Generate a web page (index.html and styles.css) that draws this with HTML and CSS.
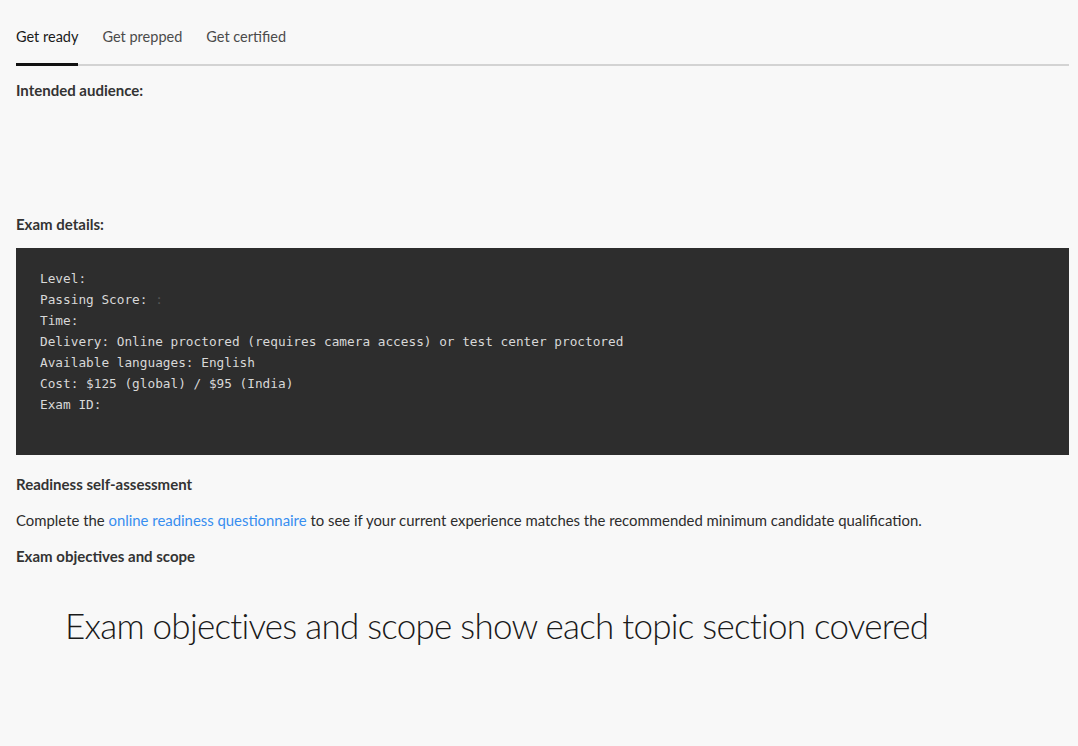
FILE: index.html
```html
<!DOCTYPE html>
<html lang="en">
<head>
<meta charset="utf-8">
<title>Get ready</title>
<link rel="stylesheet" href="styles.css">
</head>
<body>
<div class="page">
  <nav class="tabs">
    <div class="tab active">Get ready</div>
    <div class="tab">Get prepped</div>
    <div class="tab">Get certified</div>
  </nav>
  <h3 class="heading first">Intended audience:</h3>
  <div class="spacer"></div>
  <h3 class="heading">Exam details:</h3>
  <pre class="code">Level: 
Passing Score: <span class="dim">:</span>
Time: 
Delivery: Online proctored (requires camera access) or test center proctored
Available languages: English
Cost: $125 (global) / $95 (India)
Exam ID: </pre>
  <h3 class="heading">Readiness self-assessment</h3>
  <p class="para">Complete the <a class="link" href="#">online readiness questionnaire</a> to see if your current experience matches the recommended minimum candidate qualification.</p>
  <h3 class="heading">Exam objectives and scope</h3>
  <div class="banner">Exam objectives and scope show each topic section covered</div>
</div>
</body>
</html>
```

FILE: styles.css
```css
html, body {
  margin: 0;
  padding: 0;
  background: #f8f8f8;
}
body {
  font-family: Lato, "Open Sans", sans-serif;
  color: #2c2c2c;
}
.page {
  padding: 0 9px 0 16px;
}
.tabs {
  display: flex;
  gap: 24px;
  border-bottom: 2px solid #d3d3d3;
  height: 66px;
  box-sizing: border-box;
}
.tab {
  font-size: 14.5px;
  line-height: 20px;
  padding-top: 27px;
  color: #4b4b4b;
  box-sizing: border-box;
  height: 64px;
}
.tab.active {
  color: #1a1a1a;
  border-bottom: 3px solid #111;
  height: 66px;
  margin-bottom: -2px;
}
.heading {
  font-size: 15px;
  font-weight: 700;
  line-height: 20px;
  margin: 0;
  color: #333;
}
.heading.first {
  margin-top: 14px;
}
.spacer {
  height: 114px;
}
.code {
  background: #2d2d2d;
  color: #d8d8d8;
  font-family: "DejaVu Sans Mono", monospace;
  font-size: 12.75px;
  line-height: 21px;
  margin: 14px 0 0;
  padding: 20px 24px 40px;
  height: 207px;
  box-sizing: border-box;
  white-space: pre;
}
.code .dim {
  color: #555;
}
.code + .heading {
  margin-top: 19px;
}
.para {
  font-size: 14.9px;
  line-height: 20px;
  margin: 16px 0;
  color: #2c2c2c;
}
.link {
  color: #378ef0;
  text-decoration: none;
}
.banner {
  font-family: Lato, sans-serif;
  font-weight: 300;
  font-size: 35px;
  letter-spacing: -0.75px;
  color: #1a1a1a;
  padding: 38px 0 0 49px;
}
```
